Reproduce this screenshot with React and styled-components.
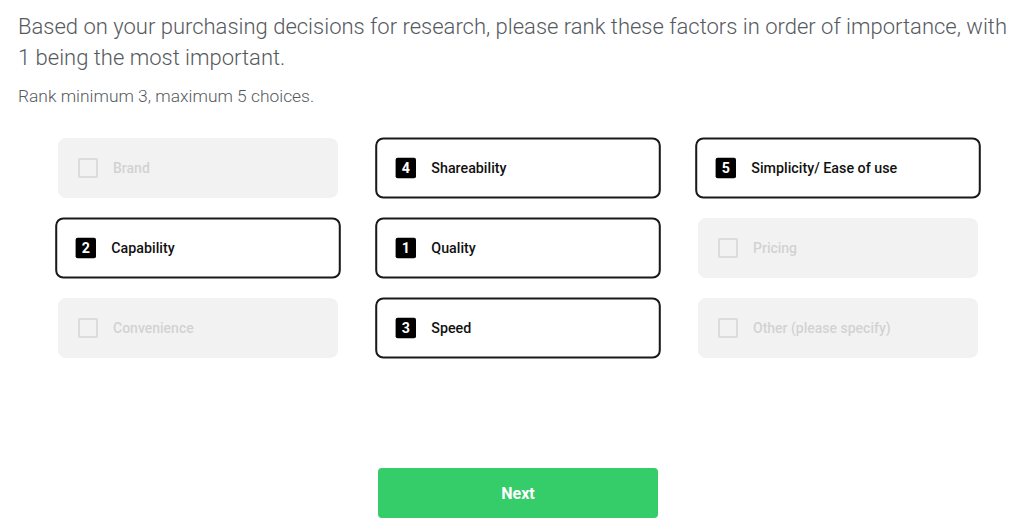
import React from "react";
import styled, { createGlobalStyle } from "styled-components";

const GlobalStyle = createGlobalStyle`
  body {
    margin: 0;
    background: #fff;
    font-family: Roboto, "Noto Sans", sans-serif;
  }
`;

const Page = styled.div`
  padding: 11px 8px 0 18px;
`;

const Question = styled.h1`
  margin: 0;
  font-size: 22px;
  font-weight: 300;
  line-height: 31px;
  color: #555a60;
`;

const Hint = styled.p`
  margin: 12px 0 0;
  font-size: 17.4px;
  font-weight: 300;
  line-height: 22px;
  color: #555a60;
`;

const Board = styled.div`
  width: 920px;
  margin: 31px 0 0 40px;
`;

const Grid = styled.div`
  display: grid;
  grid-template-columns: repeat(3, 280px);
  column-gap: 40px;
  row-gap: 20px;
`;

const Option = styled.div`
  box-sizing: border-box;
  height: 60px;
  display: flex;
  align-items: center;
  gap: 15px;
  padding: 0 20px 0 18px;
  border-radius: 8px;
  background: ${(p) => (p.$picked ? "#fff" : "#f2f2f2")};
  border: 2px solid ${(p) => (p.$picked ? "#1a1a1a" : "transparent")};
  transform: ${(p) => (p.$picked ? "scale(1.02)" : "none")};
`;

const Box = styled.span`
  box-sizing: border-box;
  width: 20px;
  height: 20px;
  border: 2px solid #dcdcdc;
  border-radius: 2px;
  flex: none;
`;

const Rank = styled.span`
  width: 20px;
  height: 20px;
  border-radius: 2px;
  background: #000;
  color: #fff;
  font-size: 14px;
  font-weight: 700;
  display: flex;
  align-items: center;
  justify-content: center;
  flex: none;
`;

const Label = styled.span`
  font-size: 14px;
  font-weight: 500;
  color: ${(p) => (p.$picked ? "#111" : "#d2d2d2")};
`;

const Footer = styled.div`
  display: flex;
  justify-content: center;
  margin-top: 110px;
`;

const NextButton = styled.button`
  width: 280px;
  height: 50px;
  border: none;
  border-radius: 4px;
  background: #35cc6a;
  color: #fff;
  font-family: Roboto, sans-serif;
  font-size: 16px;
  font-weight: 700;
  cursor: pointer;
`;

const options = [
  { label: "Brand" },
  { label: "Shareability", rank: 4 },
  { label: "Simplicity/ Ease of use", rank: 5 },
  { label: "Capability", rank: 2 },
  { label: "Quality", rank: 1 },
  { label: "Pricing" },
  { label: "Convenience" },
  { label: "Speed", rank: 3 },
  { label: "Other (please specify)" },
];

export default function App() {
  return (
    <Page>
      <GlobalStyle />
      <Question>
        Based on your purchasing decisions for research, please rank these factors in order of importance, with 1 being the most important.
      </Question>
      <Hint>Rank minimum 3, maximum 5 choices.</Hint>
      <Board>
        <Grid>
          {options.map((o) => (
            <Option key={o.label} $picked={!!o.rank}>
              {o.rank ? <Rank>{o.rank}</Rank> : <Box />}
              <Label $picked={!!o.rank}>{o.label}</Label>
            </Option>
          ))}
        </Grid>
        <Footer>
          <NextButton>Next</NextButton>
        </Footer>
      </Board>
    </Page>
  );
}
